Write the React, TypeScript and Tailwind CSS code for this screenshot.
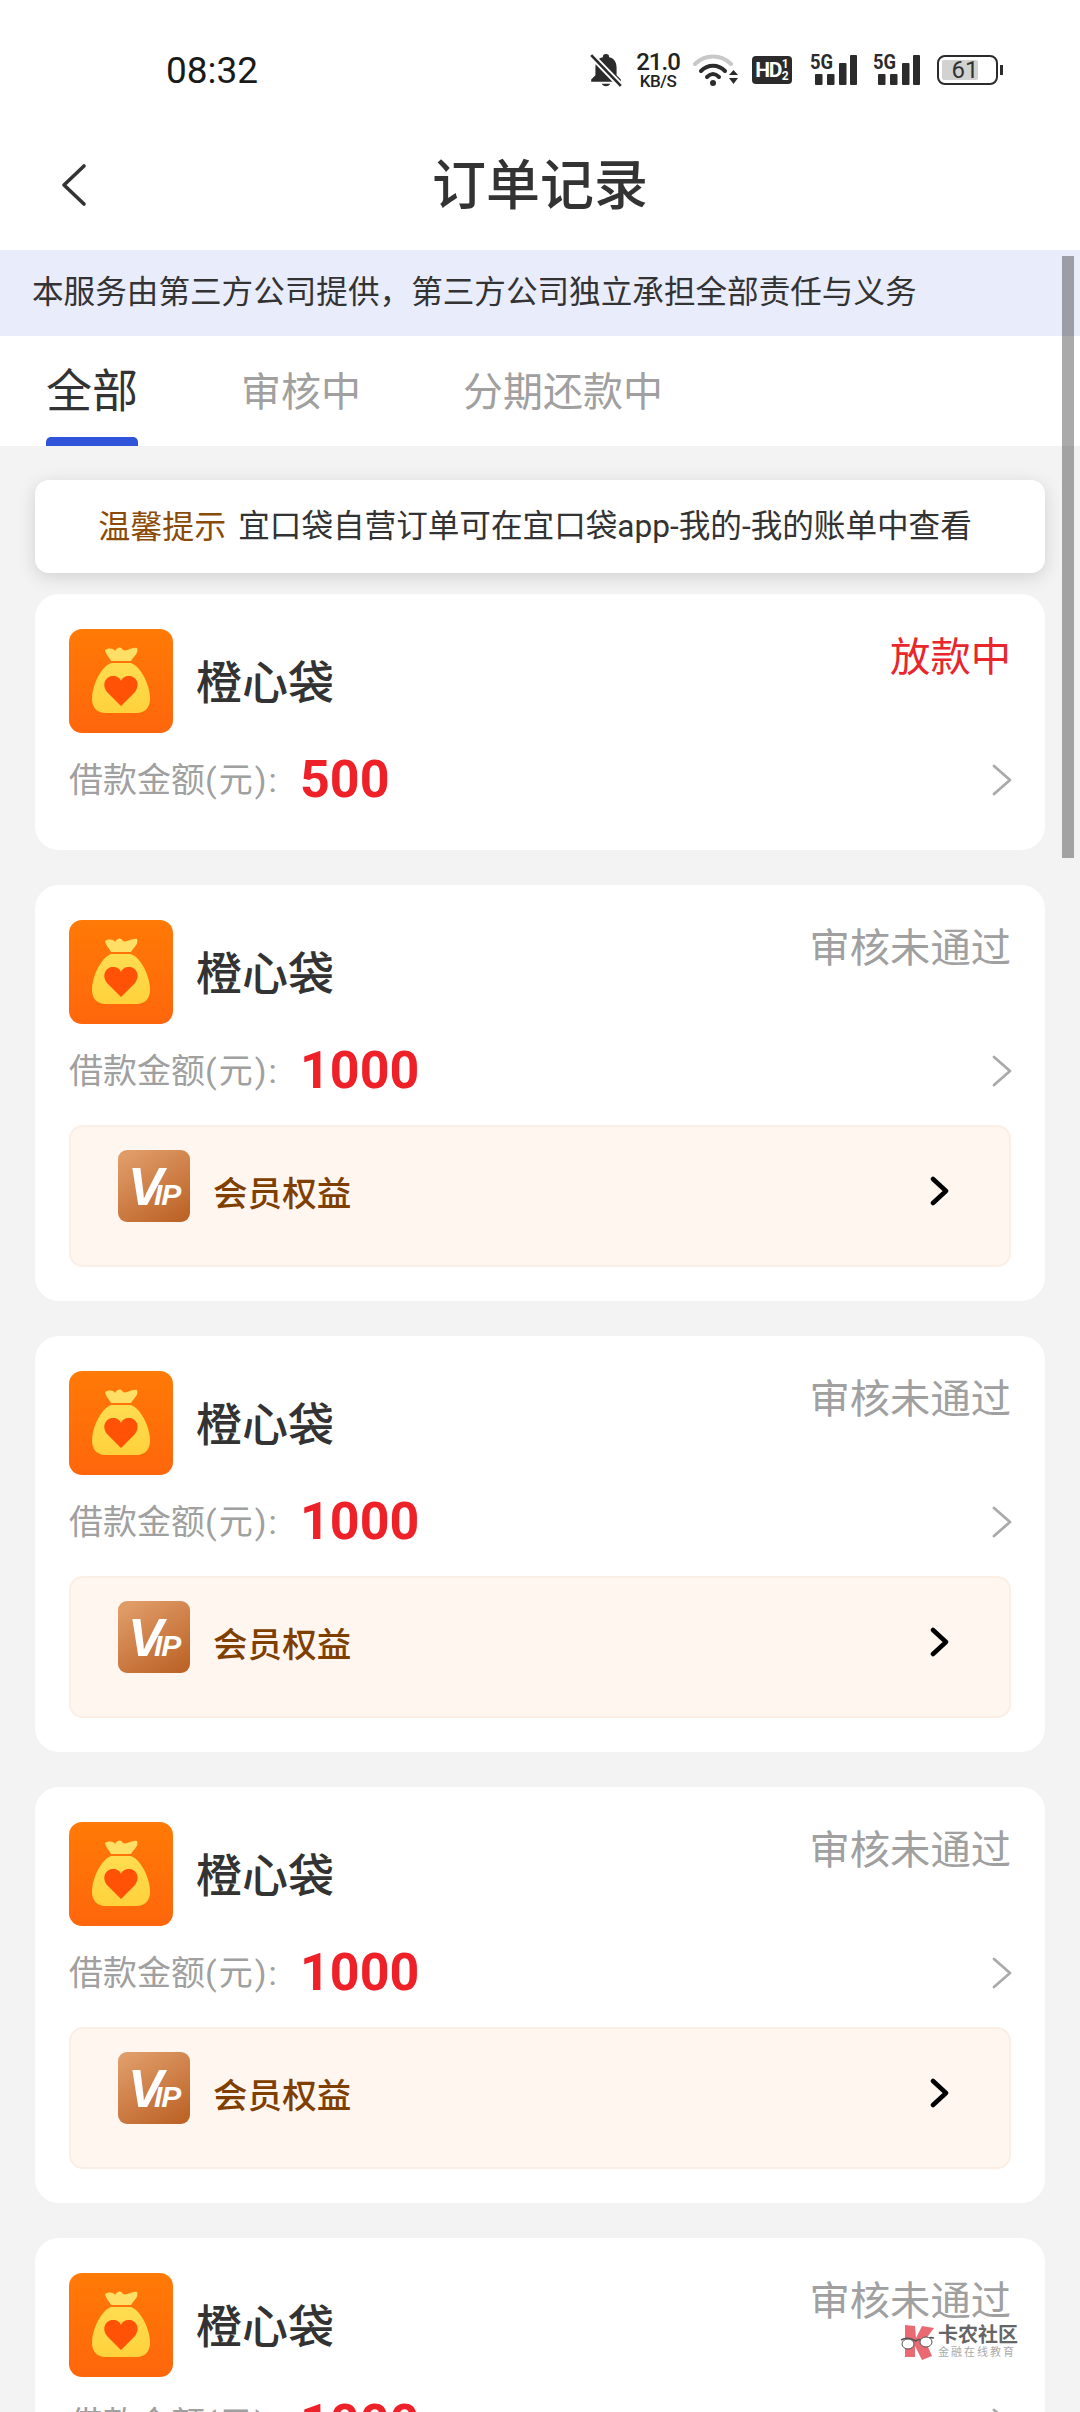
const orders = [
  { amount: "500", status: "放款中", pending: true },
  { amount: "1000", status: "审核未通过", pending: false },
  { amount: "1000", status: "审核未通过", pending: false },
  { amount: "1000", status: "审核未通过", pending: false },
  { amount: "1000", status: "审核未通过", pending: false },
];

function BagIcon() {
  return (
    <svg width="104" height="104" viewBox="0 0 104 104" className="shrink-0">
      <defs>
        <linearGradient id="bagBg" x1="0" y1="0" x2="0" y2="1">
          <stop offset="0" stopColor="#ff7a06" />
          <stop offset="1" stopColor="#ff660c" />
        </linearGradient>
        <linearGradient id="bagBody" x1="0" y1="0" x2="0" y2="1">
          <stop offset="0" stopColor="#ffdc50" />
          <stop offset="1" stopColor="#ffd23c" />
        </linearGradient>
      </defs>
      <rect width="104" height="104" rx="13" fill="url(#bagBg)" />
      <path d="M36 21C40 19 44 19 46 22C48 18 52 17 54 21C58 23 62 18 68 19C70 24 65 27 62 32L42 32C40 28 37 26 36 21Z" fill="#ffdf66" />
      <path d="M42 34L62 34C72 38 81 56 81 70C81 79 75 84 68 84L36 84C29 84 23 79 23 70C23 56 32 38 42 34Z" fill="url(#bagBody)" />
      <path d="M52 77L38 63C32 55 37 47 44 47C48 47 51 49 52 52C53 49 56 47 60 47C67 47 72 55 66 63Z" fill="#ff5206" />
    </svg>
  );
}

function VipIcon() {
  return (
    <svg width="72" height="72" viewBox="0 0 72 72" className="mb-[20px] shrink-0">
      <defs>
        <linearGradient id="vipBg" x1="0.2" y1="0" x2="0.8" y2="1">
          <stop offset="0" stopColor="#e09c68" />
          <stop offset="1" stopColor="#bd6428" />
        </linearGradient>
      </defs>
      <rect width="72" height="72" rx="9" fill="url(#vipBg)" />
      <text x="10" y="55" fill="#fff" fontSize="53" fontWeight="900" fontStyle="italic" fontFamily="Liberation Sans, sans-serif">V</text>
      <text x="36" y="55" fill="#fff" fontSize="30" fontWeight="900" fontStyle="italic" fontFamily="Liberation Sans, sans-serif" letterSpacing="-1">IP</text>
    </svg>
  );
}

function Signal() {
  return (
    <svg width="47" height="34" viewBox="0 0 47 34" className="shrink-0">
      <text x="0" y="16" fill="#2b2b2b" fontSize="20" fontWeight="700" fontFamily="Roboto, sans-serif" textLength="23" lengthAdjust="spacingAndGlyphs">5G</text>
      <rect x="5" y="21" width="7.500" height="11" rx="1" fill="#2b2b2b" />
      <rect x="17" y="21" width="7.500" height="11" rx="1" fill="#2b2b2b" />
      <rect x="29" y="10" width="7.500" height="22" rx="1" fill="#2b2b2b" />
      <rect x="40" y="2" width="7" height="30" rx="1" fill="#2b2b2b" />
    </svg>
  );
}

function StatusBar() {
  return (
    <div className="flex h-[120px] items-center justify-between pt-[20px] pl-[166px] pr-[77px]">
      <span className="text-[37px] leading-none text-[#1a1a1a]">08:32</span>
      <div className="flex items-center">
        <svg width="32" height="36" viewBox="0 0 30 34" className="ml-[-2px] shrink-0">
          <path d="M15 2C17 2 18 3 18 5C23 6 25 10 25 15L25 22L29 26L29 28L1 28L1 26L5 22L5 15C5 10 7 6 12 5C12 3 13 2 15 2Z" fill="#2b2b2b" />
          <path d="M11 30L19 30C18 33 12 33 11 30Z" fill="#2b2b2b" />
          <path d="M1 3L29 32" stroke="#fff" strokeWidth="6" />
          <path d="M1 3L29 32" stroke="#2b2b2b" strokeWidth="2.500" />
        </svg>
        <div className="ml-[14px] flex w-[44px] flex-col items-center text-[#222]">
          <span className="text-[24px] font-medium leading-[22px] tracking-[-1px]">21.0</span>
          <span className="text-[17px] font-medium leading-[16px] tracking-[-0.5px]">KB/S</span>
        </div>
        <svg width="45" height="34" viewBox="0 0 45 34" className="ml-[13px] shrink-0">
          <path d="M2 11C12 1 28 1 38 11" fill="none" stroke="#c8c8c8" strokeWidth="4" strokeLinecap="round" />
          <path d="M8 18C15 11 25 11 32 18" fill="none" stroke="#2b2b2b" strokeWidth="4" strokeLinecap="round" />
          <path d="M14 24C18 20 22 20 26 24" fill="none" stroke="#2b2b2b" strokeWidth="4" strokeLinecap="round" />
          <circle cx="20" cy="30" r="3" fill="#2b2b2b" />
          <path d="M36 22L45 22L40.500 17Z" fill="#2b2b2b" />
          <path d="M36 25L45 25L40.500 31Z" fill="#2b2b2b" />
        </svg>
        <div className="ml-[14px] flex h-[28px] w-[40px] items-center justify-center rounded-[4px] bg-[#2b2b2b] font-bold text-white">
          <span className="text-[21px] leading-none tracking-[-1.5px]">HD</span>
          <span className="ml-[1px] flex flex-col text-[12px] leading-[12px]">
            <span>1</span>
            <span>2</span>
          </span>
        </div>
        <div className="ml-[18px] flex">
          <Signal />
        </div>
        <div className="ml-[16px] flex">
          <Signal />
        </div>
        <div className="ml-[17px] flex items-center">
          <div className="relative h-[30px] w-[61px] overflow-hidden rounded-[8px] border-2 border-[#2b2b2b]">
            <div className="absolute bottom-[3px] left-[3px] top-[3px] w-[36px] rounded-[2px] bg-[#d2d2d2]" />
            <div className="relative flex h-full w-[52px] items-center justify-center text-[24px] leading-none text-[#333]">61</div>
          </div>
          <div className="ml-[2px] h-[10px] w-[3px] bg-[#2b2b2b]" />
        </div>
      </div>
    </div>
  );
}

function Tabs() {
  return (
    <div className="flex h-[110px] bg-white pl-[46px]">
      <div className="flex h-full w-[92px] flex-col items-center">
        <span className="mt-[25px] text-[46px] leading-[60px] text-[#333]">全部</span>
        <div className="mt-auto h-[9px] w-full rounded-t-[5px] bg-[#2f54d9]" />
      </div>
      <span className="ml-[103px] mt-[27px] text-[40px] leading-[60px] text-[#a0a0a0]">审核中</span>
      <span className="ml-[102px] mt-[27px] text-[40px] leading-[60px] text-[#a0a0a0]">分期还款中</span>
    </div>
  );
}

function OrderCard(props: { amount: string; status: string; pending: boolean }) {
  return (
    <div className={props.pending ? "rounded-[24px] bg-white px-[34px] pb-[40px] pt-[35px]" : "rounded-[24px] bg-white px-[34px] pb-[34px] pt-[35px]"}>
      <div className="flex items-start">
        <BagIcon />
        <span className="ml-[23px] mt-[24px] text-[46px] font-medium leading-[60px] text-[#333]">橙心袋</span>
        <span className={props.pending ? "ml-auto mt-[9px] text-[40.300px] leading-[40px] text-[#e8262c]" : "ml-auto mt-[9px] text-[40.300px] leading-[40px] text-[#a0a0a0]"}>
          {props.status}
        </span>
      </div>
      <div className="mt-[17px] flex h-[60px] items-center">
        <span className="w-[231px] text-[34px] text-[#a0a0a0]">
          借款金额<span className="tracking-[2px]">(元):</span>
        </span>
        <span className="text-[52px] font-bold leading-none text-[#ee2028]">{props.amount}</span>
        <svg width="20" height="32" viewBox="0 0 20 32" className="ml-auto mr-[-1px]">
          <path d="M2 2L18 16L2 30" fill="none" stroke="#aaaaaa" strokeWidth="2.800" strokeLinecap="round" strokeLinejoin="round" />
        </svg>
      </div>
      {!props.pending && (
        <div className="mt-[24px] flex h-[142px] items-center rounded-[14px] border-2 border-[#fbeee4] bg-[#fff6f0] pl-[47px] pr-[59px]">
          <VipIcon />
          <span className="mb-[2px] ml-[23px] text-[34.600px] font-medium text-[#7f3f00]">会员权益</span>
          <svg width="20" height="30" viewBox="0 0 20 30" className="mb-[10px] ml-auto">
            <path d="M3 3L16 15L3 27" fill="none" stroke="#000" strokeWidth="4.500" strokeLinecap="round" strokeLinejoin="round" />
          </svg>
        </div>
      )}
    </div>
  );
}

export default function App() {
  return (
    <div className="relative h-[2412px] w-[1080px] overflow-hidden bg-[#f3f3f3] font-[Roboto,'Noto_Sans_CJK_SC',sans-serif]">
      <div className="bg-white">
        <StatusBar />
        {/* Header */}
        <div className="relative flex h-[130px] items-center justify-center pt-[4px]">
          <svg width="28" height="44" viewBox="0 0 28 44" className="absolute left-[60px] top-[43px]">
            <path d="M24 3L4 22L24 41" fill="none" stroke="#333" strokeWidth="3.600" strokeLinecap="round" strokeLinejoin="round" />
          </svg>
          <span className="text-[54px] font-medium leading-none text-[#333]">订单记录</span>
        </div>
      </div>

      <div className="flex h-[86px] items-center bg-[#e9ecfb] pl-[32px] text-[31.600px] text-[#333]">
        本服务由第三方公司提供，第三方公司独立承担全部责任与义务
      </div>

      <Tabs />

      <div className="flex flex-col px-[35px] pt-[34px]">
        <div className="flex h-[93px] items-center justify-center rounded-[14px] bg-white pr-[10px] text-[32px] text-[#333] shadow-[0_4px_18px_rgba(0,0,0,0.14)]">
          <span className="text-[#8a4b08]">温馨提示</span>
          <span className="ml-[12px] text-[31.600px]">宜口袋自营订单可在宜口袋app-我的-我的账单中查看</span>
        </div>
        <div className="mt-[21px] flex flex-col gap-[35px]">
          {orders.map((o, i) => (
            <OrderCard key={i} amount={o.amount} status={o.status} pending={o.pending} />
          ))}
        </div>
      </div>

      {/* Scrollbar */}
      <div className="absolute left-[1062px] top-[256px] h-[602px] w-[12px] bg-[#00000055]" />

      {/* Watermark */}
      <div className="absolute left-[900px] top-[2324px] flex items-center">
        <svg width="36" height="36" viewBox="0 0 36 36">
          <path d="M5 1L15 2L16 14L22 2L34 4L25 16L32 32L22 36L15 22L15 33L5 33Z" fill="#ea6a74" />
          <path d="M1 16C6 13 11 14 16 17C18 15 20 15 22 17C26 14 30 13 34 14" fill="none" stroke="#555" strokeWidth="1.500" />
          <ellipse cx="8" cy="20" rx="6" ry="5" fill="#fff" stroke="#555" strokeWidth="1" />
          <ellipse cx="26" cy="18" rx="6" ry="5" fill="#fff" stroke="#555" strokeWidth="1" />
        </svg>
        <div className="ml-[2px] flex flex-col">
          <span className="text-[20px] font-bold leading-[22px] text-[#666]">卡农社区</span>
          <span className="text-[11px] leading-[14px] tracking-[2px] text-[#aaa]">金融在线教育</span>
        </div>
      </div>
    </div>
  );
}
